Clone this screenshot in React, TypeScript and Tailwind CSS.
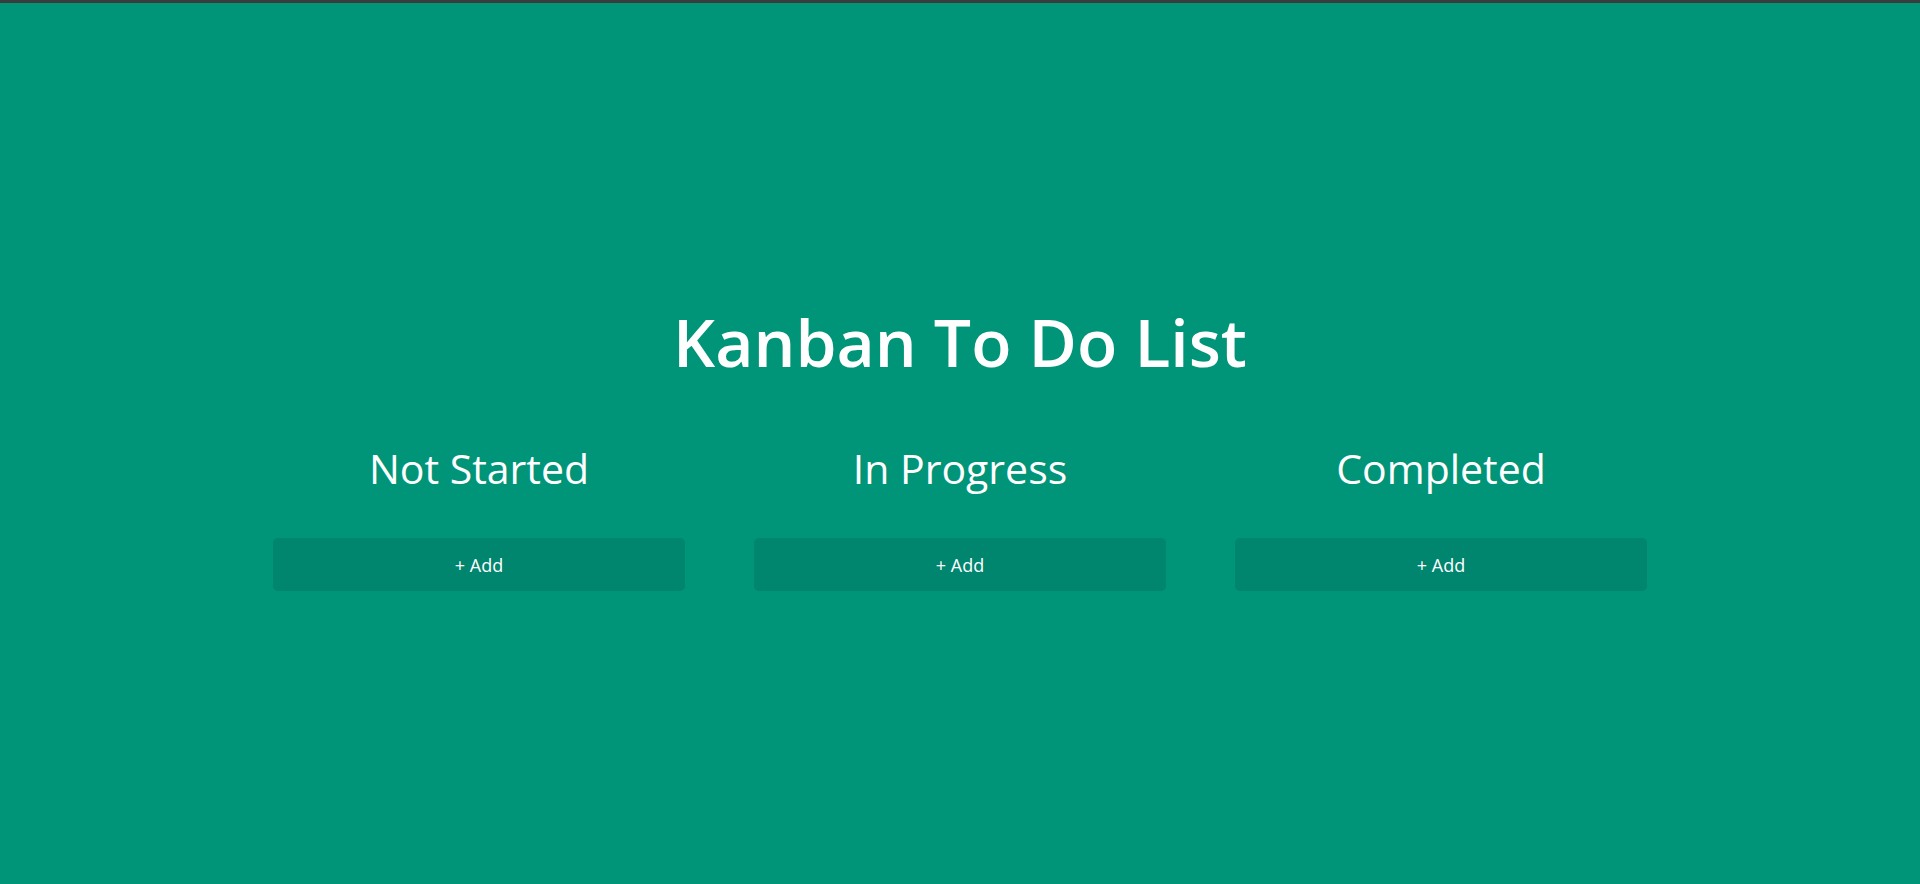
import React from 'react';

const columns = ['Not Started', 'In Progress', 'Completed'];

export default function App() {
  return (
    <div
      className="min-h-screen w-full bg-[#009578] text-white"
      style={{ fontFamily: '"Open Sans", "Liberation Sans", sans-serif' }}
    >
      {/* barre du haut */}
      <div className="h-[3px] w-full bg-[#3b3b3b]" />

      <div className="pt-[305px] flex flex-col items-center">
        <h1 className="text-[66px] leading-[66px] font-semibold">Kanban To Do List</h1>

        <div className="mt-[74px] grid grid-cols-3 gap-x-[69px] w-[1374px]">
          {columns.map((title) => (
            <div key={title} className="flex flex-col items-stretch">
              <h2 className="text-[41px] leading-[41px] font-normal text-center">{title}</h2>
              <button
                type="button"
                className="mt-[49px] h-[53px] w-full rounded-[5px] bg-[#00856f] text-[18px] leading-[24px] text-white"
              >
                + Add
              </button>
            </div>
          ))}
        </div>
      </div>
    </div>
  );
}
